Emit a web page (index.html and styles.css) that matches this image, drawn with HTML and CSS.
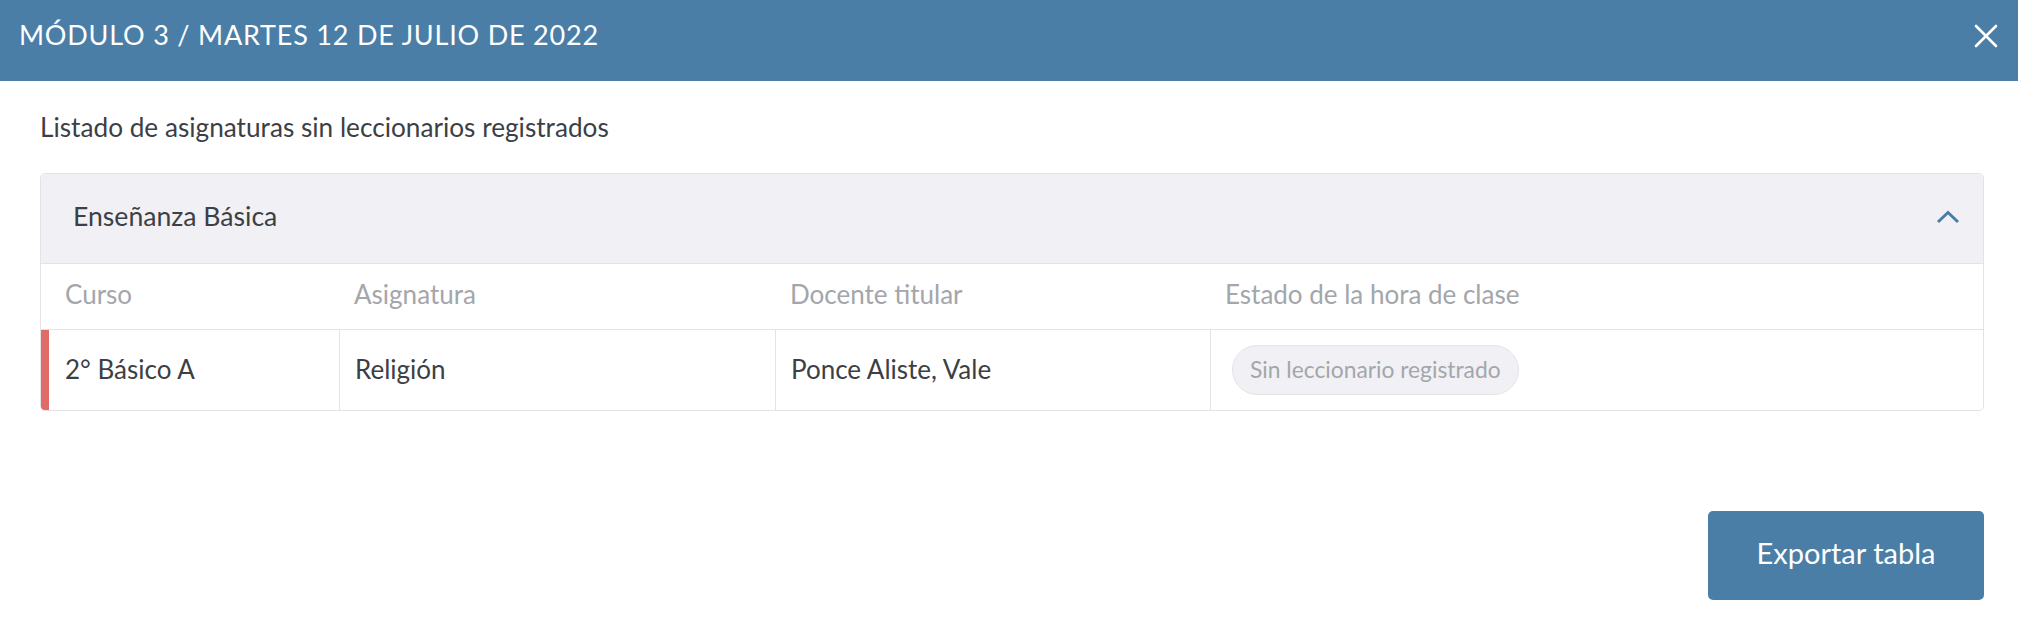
FILE: index.html
```html
<!DOCTYPE html>
<html lang="es">
<head>
<meta charset="utf-8">
<title>Módulo 3</title>
<link rel="stylesheet" href="styles.css">
</head>
<body>
<div class="modal">
  <header class="modal-header">
    <h1 class="modal-title">MÓDULO 3 / MARTES 12 DE JULIO DE 2022</h1>
    <button class="close-btn" aria-label="Cerrar">
      <svg width="24" height="24" viewBox="0 0 24 24"><path d="M2 2 L22 22 M22 2 L2 22" stroke="#fff" stroke-width="2.6" stroke-linecap="round" fill="none"/></svg>
    </button>
  </header>
  <main class="modal-body">
    <p class="intro">Listado de asignaturas sin leccionarios registrados</p>
    <section class="card">
      <div class="card-header">
        <span class="card-title">Enseñanza Básica</span>
        <svg class="chevron" width="24" height="14" viewBox="0 0 24 14"><path d="M2 12 L12 2.5 L22 12" stroke="#4a7ea7" stroke-width="3" fill="none"/></svg>
      </div>
      <div class="grid-row head-row">
        <div class="cell first">Curso</div>
        <div class="cell">Asignatura</div>
        <div class="cell">Docente titular</div>
        <div class="cell">Estado de la hora de clase</div>
      </div>
      <div class="grid-row data-row">
        <div class="cell first">2° Básico A</div>
        <div class="cell">Religión</div>
        <div class="cell">Ponce Aliste, Vale</div>
        <div class="cell"><span class="pill">Sin leccionario registrado</span></div>
      </div>
    </section>
    <div class="actions">
      <button class="export-btn">Exportar tabla</button>
    </div>
  </main>
</div>
</body>
</html>
```

FILE: styles.css
```css
* { box-sizing: border-box; }
html, body { margin: 0; padding: 0; background: #ffffff; }
body {
  font-family: Lato, "Noto Sans", "Liberation Sans", sans-serif;
  color: #3c3f45;
  width: 2018px;
  height: 620px;
  overflow: hidden;
}
.modal-header {
  height: 81px;
  background: #4a7ea7;
  display: flex;
  align-items: center;
  justify-content: space-between;
  padding: 0 20px 10px 19px;
}
.modal-title {
  margin: 0;
  font-size: 27px;
  letter-spacing: 0.8px;
  font-weight: 400;
  color: #ffffff;
  line-height: 1.2;
}
.close-btn {
  border: 0;
  background: transparent;
  padding: 0;
  width: 24px;
  height: 24px;
  display: flex;
}
.modal-body {
  padding: 0 34px 0 40px;
}
.intro {
  margin: 0;
  padding-top: 31px;
  font-size: 26.2px;
  line-height: 1.2;
  height: 92px;
}
.card {
  border: 1px solid #e3e3e7;
  border-radius: 5px;
  overflow: hidden;
}
.card-header {
  height: 90px;
  background: #f1f1f5;
  border-bottom: 1px solid #e3e3e7;
  display: flex;
  align-items: center;
  justify-content: space-between;
  padding: 0 23px 3px 32px;
}
.card-title { font-size: 26.6px; line-height: 1.2; }
.grid-row {
  display: grid;
  grid-template-columns: 298px 436px 435px 1fr;
}
.head-row {
  height: 66px;
  border-bottom: 1px solid #e3e3e7;
  color: #a3a6ab;
}
.head-row .cell { padding-bottom: 3px; }
.data-row {
  height: 80px;
}
.cell {
  display: flex;
  align-items: center;
  padding-left: 15px;
  font-size: 26px;
  line-height: 1.2;
}
.head-row .cell.first { padding-left: 24px; }
.data-row .cell { border-left: 1px solid #e3e3e7; }
.data-row .cell.first { border-left: 8px solid #e06b69; padding-left: 16px; }
.pill {
  margin-left: 6px;
  height: 50px;
  padding: 0 17px;
  border: 1px solid #e4e4e8;
  background: #f1f1f5;
  border-radius: 25px;
  display: flex;
  align-items: center;
  color: #a3a6ab;
  font-size: 22.8px;
}
.actions {
  display: flex;
  justify-content: flex-end;
  padding-top: 100px;
}
.export-btn {
  width: 276px;
  height: 89px;
  border: 0;
  border-radius: 5px;
  background: #4a7ea7;
  color: #ffffff;
  font-family: inherit;
  font-size: 29px;
  padding: 0 0 6px 0;
}
```
